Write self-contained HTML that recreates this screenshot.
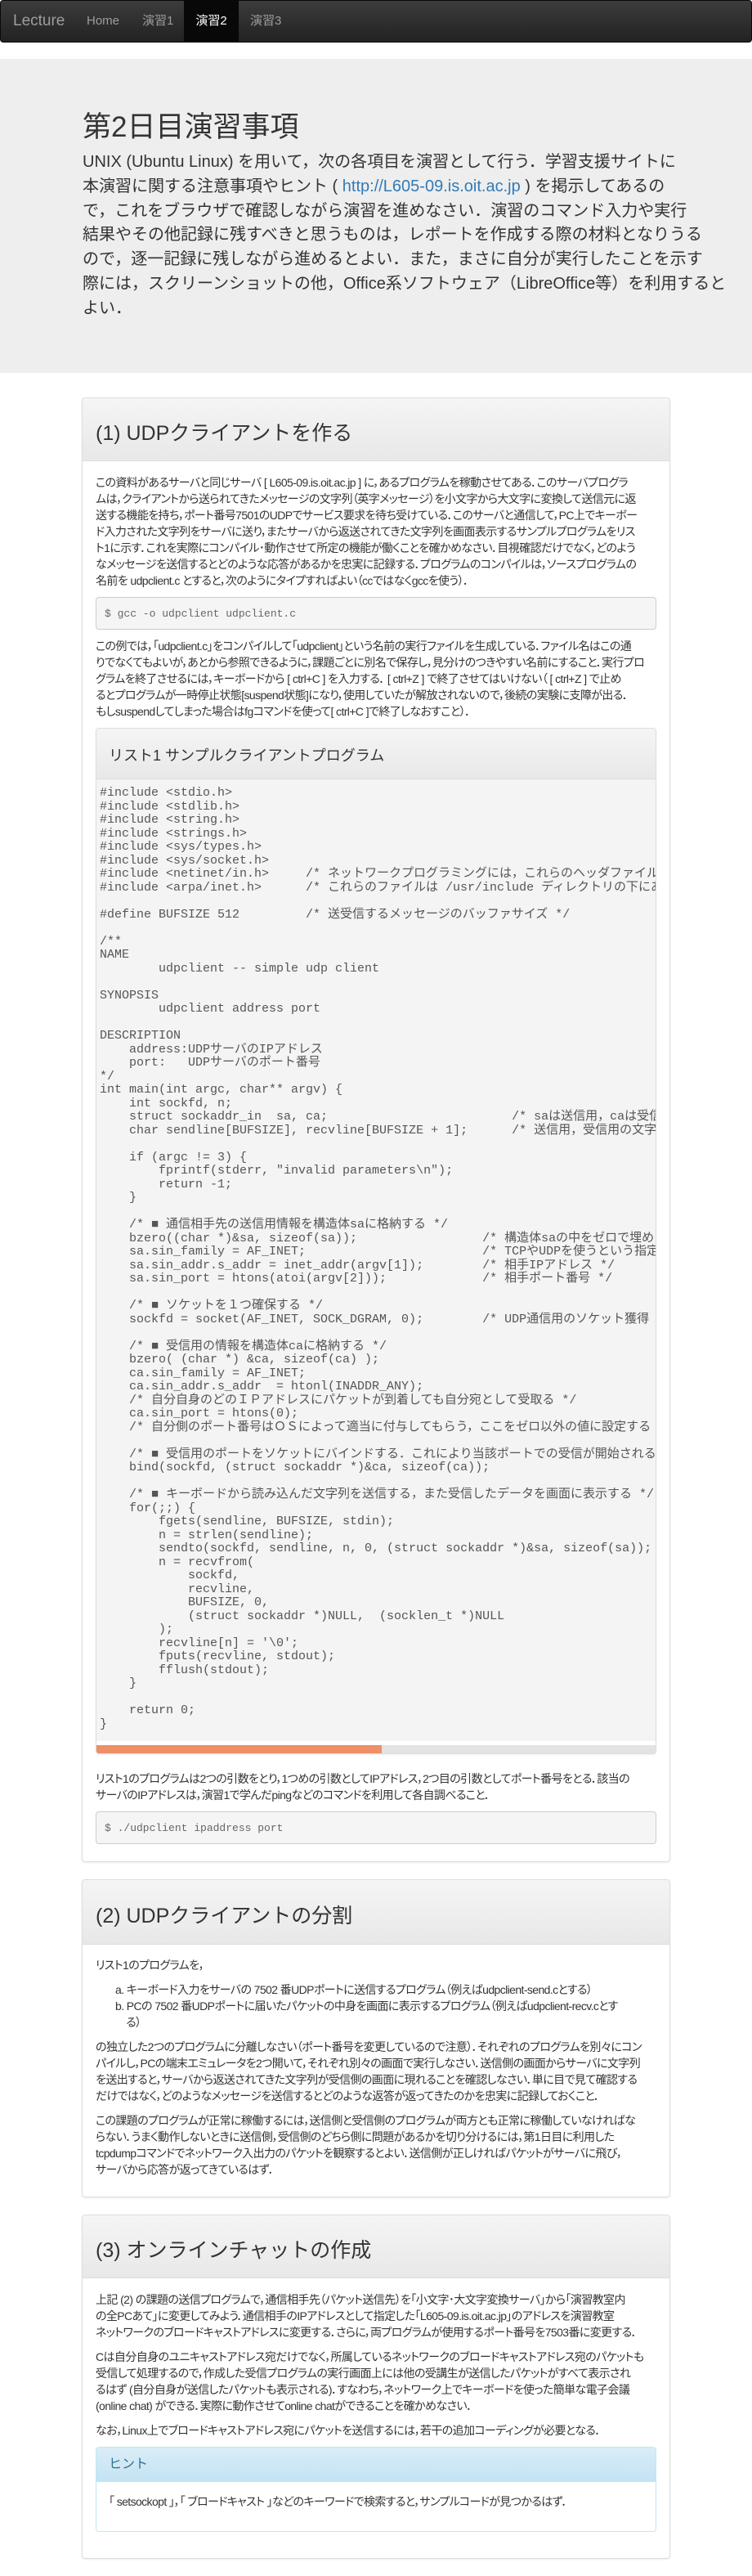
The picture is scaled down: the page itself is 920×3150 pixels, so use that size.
<!DOCTYPE html>
<html><head><meta charset="utf-8">
<style>
*{box-sizing:border-box;margin:0;padding:0}
html,body{width:920px;height:3150px;background:#fff;overflow:hidden}
body{font-family:"Liberation Sans","Noto Sans CJK JP",sans-serif;color:#333;font-size:14px;line-height:20px;position:relative}
.nav{position:absolute;left:0;top:0;width:920px;height:52px;border:1px solid #080808;border-radius:4px;background:linear-gradient(#3c3c3c,#222);}
.nav span{position:absolute;top:0;line-height:50px;color:#9d9d9d;font-size:15px}
.nav .brand{font-size:19px}
.nav .act{background:#080808;color:#fff;left:224px;width:67px;text-align:center}
.jum{position:absolute;left:0;top:72px;width:920px;height:384px;background:#eee}
.jum h1{position:absolute;left:101px;top:60px;font-size:35px;line-height:48px;font-weight:normal;white-space:nowrap}
.jum p{position:absolute;left:101px;top:112px;font-size:20px;line-height:29.8px;white-space:nowrap}
.jum a{color:#337ab7;text-decoration:none}
.panel{position:absolute;left:100px;width:720px;border:1px solid #ddd;border-radius:4px;box-shadow:0 1px 2px rgba(0,0,0,.08);overflow:hidden;background:#fff}
.ph{height:77px;border-bottom:1px solid #ddd;background:linear-gradient(#f5f5f5,#e8e8e8);padding-left:16px}
.ph h3{font-size:25px;font-weight:normal;line-height:77px;position:relative;top:5px;white-space:nowrap}
.pb{padding:15px 16px 0 16px}
.pb p{white-space:nowrap;margin-bottom:10px;letter-spacing:-0.6px;font-feature-settings:"palt"}
pre.cmd{font-family:"Liberation Mono","Noto Sans CJK JP",monospace;font-size:13px;line-height:19px;height:40px;padding:9.5px 10px;background:#f5f5f5;border:1px solid #ccc;border-radius:4px;color:#666;margin-bottom:10px}
.lp{border:1px solid #ddd;border-radius:4px;margin-bottom:20px;overflow:hidden;box-shadow:0 1px 2px rgba(0,0,0,.06)}
.lph{height:62px;border-bottom:1px solid #ddd;background:linear-gradient(#f5f5f5,#e8e8e8);padding-left:15px;font-size:18px;line-height:62px;position:relative}
.lph span{position:relative;top:2px}
pre.code{font-family:"Liberation Mono","Noto Sans CJK JP",monospace;font-size:15px;line-height:16.5px;background:#f4f4f4;color:#555;padding:9px 4px 12px 4px;overflow:hidden;white-space:pre}
.bar{margin-top:5px;height:10px;background:#e3e3e3}
.bar div{width:51%;height:10px;background:#ef8f66}
ol{list-style:none;margin:0 0 10px 24px;letter-spacing:-0.6px;font-feature-settings:"palt"}
ol li{white-space:nowrap}
.hint{border:1px solid #bce8f1;border-radius:4px;overflow:hidden}
.hh{height:42px;background:linear-gradient(#d9edf7,#c4e3f3);border-bottom:1px solid #bce8f1;color:#31708f;font-size:16px;line-height:42px;padding-left:15px}
.hb{padding:14px 15px 0 15px;height:60px;white-space:nowrap;letter-spacing:-0.6px;font-feature-settings:"palt"}
</style></head><body>
<div class="nav">
<span class="brand" style="left:15px">Lecture</span>
<span style="left:105px">Home</span>
<span style="left:173px">演習1</span>
<span class="act">演習2</span>
<span style="left:305px">演習3</span>
</div>
<div class="jum">
<h1>第2日目演習事項</h1>
<p>UNIX (Ubuntu Linux) を用いて，次の各項目を演習として行う．学習支援サイトに<br>本演習に関する注意事項やヒント ( <a>http://L605-09.is.oit.ac.jp</a> ) を掲示してあるの<br>で，これをブラウザで確認しながら演習を進めなさい．演習のコマンド入力や実行<br>結果やその他記録に残すべきと思うものは，レポートを作成する際の材料となりうる<br>ので，逐一記録に残しながら進めるとよい．また，まさに自分が実行したことを示す<br>際には，スクリーンショットの他，Office系ソフトウェア（LibreOffice等）を利用すると<br>よい．</p>
</div>

<div class="panel" style="top:486px;height:1791px">
<div class="ph"><h3>(1) UDPクライアントを作る</h3></div>
<div class="pb" style="padding-top:16px">
<p>この資料があるサーバと同じサーバ [ L605-09.is.oit.ac.jp ] に，あるプログラムを稼動させてある．このサーバプログラ<br>ムは，クライアントから送られてきたメッセージの文字列（英字メッセージ）を小文字から大文字に変換して送信元に返<br>送する機能を持ち，ポート番号7501のUDPでサービス要求を待ち受けている．このサーバと通信して，PC上でキーボー<br>ド入力された文字列をサーバに送り，またサーバから返送されてきた文字列を画面表示するサンプルプログラムをリス<br>ト1に示す．これを実際にコンパイル･動作させて所定の機能が働くことを確かめなさい．目視確認だけでなく，どのよう<br>なメッセージを送信するとどのような応答があるかを忠実に記録する．プログラムのコンパイルは，ソースプログラムの<br>名前を udpclient.c とすると，次のようにタイプすればよい（ccではなくgccを使う）．</p>
<pre class="cmd">$ gcc -o udpclient udpclient.c</pre>
<p>この例では，「udpclient.c」をコンパイルして「udpclient」という名前の実行ファイルを生成している．ファイル名はこの通<br>りでなくてもよいが，あとから参照できるように，課題ごとに別名で保存し，見分けのつきやすい名前にすること．実行プロ<br>グラムを終了させるには，キーボードから [ ctrl+C ] を入力する． [ ctrl+Z ] で終了させてはいけない（ [ ctrl+Z ] で止め<br>るとプログラムが一時停止状態[suspend状態]になり，使用していたが解放されないので，後続の実験に支障が出る．<br>もしsuspendしてしまった場合はfgコマンドを使って[ ctrl+C ]で終了しなおすこと）．</p>
<div class="lp">
<div class="lph"><span>リスト1 サンプルクライアントプログラム</span></div>
<pre class="code">#include &lt;stdio.h&gt;
#include &lt;stdlib.h&gt;
#include &lt;string.h&gt;
#include &lt;strings.h&gt;
#include &lt;sys/types.h&gt;
#include &lt;sys/socket.h&gt;
#include &lt;netinet/in.h&gt;     /* ネットワークプログラミングには，これらのヘッダファイルが必要 */
#include &lt;arpa/inet.h&gt;      /* これらのファイルは /usr/include ディレクトリの下にある */

#define BUFSIZE 512         /* 送受信するメッセージのバッファサイズ */

/**
NAME
        udpclient -- simple udp client

SYNOPSIS
        udpclient address port

DESCRIPTION
    address:UDPサーバのIPアドレス
    port:   UDPサーバのポート番号
*/
int main(int argc, char** argv) {
    int sockfd, n;
    struct sockaddr_in  sa, ca;                         /* saは送信用，caは受信用 */
    char sendline[BUFSIZE], recvline[BUFSIZE + 1];      /* 送信用，受信用の文字列 */

    if (argc != 3) {
        fprintf(stderr, "invalid parameters\n");
        return -1;
    }

    /* ■ 通信相手先の送信用情報を構造体saに格納する */
    bzero((char *)&amp;sa, sizeof(sa));                 /* 構造体saの中をゼロで埋める */
    sa.sin_family = AF_INET;                        /* TCPやUDPを使うという指定 */
    sa.sin_addr.s_addr = inet_addr(argv[1]);        /* 相手IPアドレス */
    sa.sin_port = htons(atoi(argv[2]));             /* 相手ポート番号 */

    /* ■ ソケットを１つ確保する */
    sockfd = socket(AF_INET, SOCK_DGRAM, 0);        /* UDP通信用のソケット獲得 */

    /* ■ 受信用の情報を構造体caに格納する */
    bzero( (char *) &amp;ca, sizeof(ca) );
    ca.sin_family = AF_INET;
    ca.sin_addr.s_addr  = htonl(INADDR_ANY);
    /* 自分自身のどのＩＰアドレスにパケットが到着しても自分宛として受取る */
    ca.sin_port = htons(0);
    /* 自分側のポート番号はＯＳによって適当に付与してもらう，ここをゼロ以外の値に設定する */

    /* ■ 受信用のポートをソケットにバインドする．これにより当該ポートでの受信が開始される */
    bind(sockfd, (struct sockaddr *)&amp;ca, sizeof(ca));

    /* ■ キーボードから読み込んだ文字列を送信する，また受信したデータを画面に表示する */
    for(;;) {
        fgets(sendline, BUFSIZE, stdin);
        n = strlen(sendline);
        sendto(sockfd, sendline, n, 0, (struct sockaddr *)&amp;sa, sizeof(sa));
        n = recvfrom(
            sockfd,
            recvline,
            BUFSIZE, 0,
            (struct sockaddr *)NULL,  (socklen_t *)NULL
        );
        recvline[n] = '\0';
        fputs(recvline, stdout);
        fflush(stdout);
    }

    return 0;
}</pre>
<div class="bar"><div></div></div>
</div>
<p>リスト1のプログラムは2つの引数をとり，1つめの引数としてIPアドレス，2つ目の引数としてポート番号をとる．該当の<br>サーバのIPアドレスは，演習1で学んだpingなどのコマンドを利用して各自調べること．</p>
<pre class="cmd">$ ./udpclient ipaddress port</pre>
</div>
</div>

<div class="panel" style="top:2298px;height:389px">
<div class="ph" style="height:79px"><h3 style="line-height:79px">(2) UDPクライアントの分割</h3></div>
<div class="pb">
<p>リスト1のプログラムを，</p>
<ol>
<li>a. キーボード入力をサーバの 7502 番UDPポートに送信するプログラム（例えばudpclient-send.cとする）</li>
<li>b. PCの 7502 番UDPポートに届いたパケットの中身を画面に表示するプログラム（例えばudpclient-recv.cとす</li>
<li>&nbsp;&nbsp;&nbsp;&nbsp;る）</li>
</ol>
<p>の独立した2つのプログラムに分離しなさい（ポート番号を変更しているので注意）．それぞれのプログラムを別々にコン<br>パイルし，PCの端末エミュレータを2つ開いて，それぞれ別々の画面で実行しなさい．送信側の画面からサーバに文字列<br>を送出すると，サーバから返送されてきた文字列が受信側の画面に現れることを確認しなさい．単に目で見て確認する<br>だけではなく，どのようなメッセージを送信するとどのような返答が返ってきたのかを忠実に記録しておくこと．</p>
<p>この課題のプログラムが正常に稼働するには，送信側と受信側のプログラムが両方とも正常に稼働していなければな<br>らない．うまく動作しないときに送信側，受信側のどちら側に問題があるかを切り分けるには，第1日目に利用した<br>tcpdumpコマンドでネットワーク入出力のパケットを観察するとよい．送信側が正しければパケットがサーバに飛び，<br>サーバから応答が返ってきているはず．</p>
</div>
</div>

<div class="panel" style="top:2708px;height:421px">
<div class="ph"><h3>(3) オンラインチャットの作成</h3></div>
<div class="pb" style="padding-top:16px">
<p>上記 (2) の課題の送信プログラムで，通信相手先（パケット送信先）を「小文字･大文字変換サーバ」から「演習教室内<br>の全PCあて」に変更してみよう．通信相手のIPアドレスとして指定した「L605-09.is.oit.ac.jp」のアドレスを演習教室<br>ネットワークのブロードキャストアドレスに変更する．さらに，両プログラムが使用するポート番号を7503番に変更する．</p>
<p>Cは自分自身のユニキャストアドレス宛だけでなく，所属しているネットワークのブロードキャストアドレス宛のパケットも<br>受信して処理するので，作成した受信プログラムの実行画面上には他の受講生が送信したパケットがすべて表示され<br>るはず (自分自身が送信したパケットも表示される)．すなわち，ネットワーク上でキーボードを使った簡単な電子会議<br>(online chat) ができる．実際に動作させてonline chatができることを確かめなさい．</p>
<p>なお，Linux上でブロードキャストアドレス宛にパケットを送信するには，若干の追加コーディングが必要となる．</p>
<div class="hint">
<div class="hh">ヒント</div>
<div class="hb">「 setsockopt 」，「 ブロードキャスト 」などのキーワードで検索すると，サンプルコードが見つかるはず．</div>
</div>
</div>
</div>
</body></html>
